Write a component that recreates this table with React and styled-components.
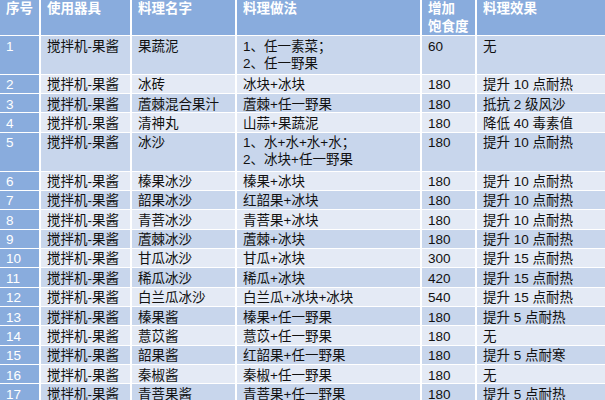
import React from "react";
import styled, { createGlobalStyle } from "styled-components";

const Global = createGlobalStyle`
  html, body { margin: 0; padding: 0; background: #ffffff; }
  body { font-family: "Liberation Sans", "Noto Sans CJK SC", sans-serif; }
`;

const COLS = "39px 89px 103px 183px 53px 128px";

const Table = styled.div`
  width: 605px;
  display: flex;
  flex-direction: column;
  gap: 1px;
  background: #ffffff;
`;

const Row = styled.div`
  display: grid;
  grid-template-columns: ${COLS};
  column-gap: 2px;
  height: ${(p) => p.$h}px;
`;

const HeadCell = styled.div`
  background: #89acdd;
  color: #ffffff;
  font-weight: 700;
  font-size: 13.5px;
  line-height: 18px;
  padding: 0 6px;
  white-space: pre;
  overflow: hidden;
`;

const NumCell = styled.div`
  background: #89acdd;
  color: #ffffff;
  font-size: 13.5px;
  line-height: 17px;
  padding: 1.5px 6px 0;
  overflow: hidden;
`;

const Cell = styled.div`
  background: ${(p) => (p.$odd ? "#c8d6ec" : "#e4eaf5")};
  color: #111111;
  font-size: 13.5px;
  line-height: 17px;
  padding: 1.5px 6px 0;
  white-space: pre;
  overflow: hidden;
`;

const rows = [
  ["1", "搅拌机-果酱", "果蔬泥", "1、任一素菜；\n2、任一野果", "60", "无"],
  ["2", "搅拌机-果酱", "冰砖", "冰块+冰块", "180", "提升 10 点耐热"],
  ["3", "搅拌机-果酱", "蔖棘混合果汁", "蔖棘+任一野果", "180", "抵抗 2 级风沙"],
  ["4", "搅拌机-果酱", "清神丸", "山蒜+果蔬泥", "180", "降低 40 毒素值"],
  ["5", "搅拌机-果酱", "冰沙", "1、水+水+水+水；\n2、冰块+任一野果", "180", "提升 10 点耐热"],
  ["6", "搅拌机-果酱", "榛果冰沙", "榛果+冰块", "180", "提升 10 点耐热"],
  ["7", "搅拌机-果酱", "韶果冰沙", "红韶果+冰块", "180", "提升 10 点耐热"],
  ["8", "搅拌机-果酱", "青菩冰沙", "青菩果+冰块", "180", "提升 10 点耐热"],
  ["9", "搅拌机-果酱", "蔖棘冰沙", "蔖棘+冰块", "180", "提升 10 点耐热"],
  ["10", "搅拌机-果酱", "甘瓜冰沙", "甘瓜+冰块", "300", "提升 15 点耐热"],
  ["11", "搅拌机-果酱", "稀瓜冰沙", "稀瓜+冰块", "420", "提升 15 点耐热"],
  ["12", "搅拌机-果酱", "白兰瓜冰沙", "白兰瓜+冰块+冰块", "540", "提升 15 点耐热"],
  ["13", "搅拌机-果酱", "榛果酱", "榛果+任一野果", "180", "提升 5 点耐热"],
  ["14", "搅拌机-果酱", "薏苡酱", "薏苡+任一野果", "180", "无"],
  ["15", "搅拌机-果酱", "韶果酱", "红韶果+任一野果", "180", "提升 5 点耐寒"],
  ["16", "搅拌机-果酱", "秦椒酱", "秦椒+任一野果", "180", "无"],
  ["17", "搅拌机-果酱", "青菩果酱", "青菩果+任一野果", "180", "提升 5 点耐热"],
];

const SINGLE = 18.36;

export default function App() {
  return (
    <>
      <Global />
      <Table>
        <Row $h={35}>
          <HeadCell>序号</HeadCell>
          <HeadCell>使用器具</HeadCell>
          <HeadCell>料理名字</HeadCell>
          <HeadCell>料理做法</HeadCell>
          <HeadCell>{"增加\n饱食度"}</HeadCell>
          <HeadCell>料理效果</HeadCell>
        </Row>
        {rows.map((r, i) => {
          const double = r[3].includes("\n");
          const odd = i % 2 === 0;
          return (
            <Row key={r[0]} $h={double ? SINGLE * 2 + 1 : SINGLE}>
              <NumCell>{r[0]}</NumCell>
              <Cell $odd={odd}>{r[1]}</Cell>
              <Cell $odd={odd}>{r[2]}</Cell>
              <Cell $odd={odd}>{r[3]}</Cell>
              <Cell $odd={odd}>{r[4]}</Cell>
              <Cell $odd={odd}>{r[5]}</Cell>
            </Row>
          );
        })}
      </Table>
    </>
  );
}
